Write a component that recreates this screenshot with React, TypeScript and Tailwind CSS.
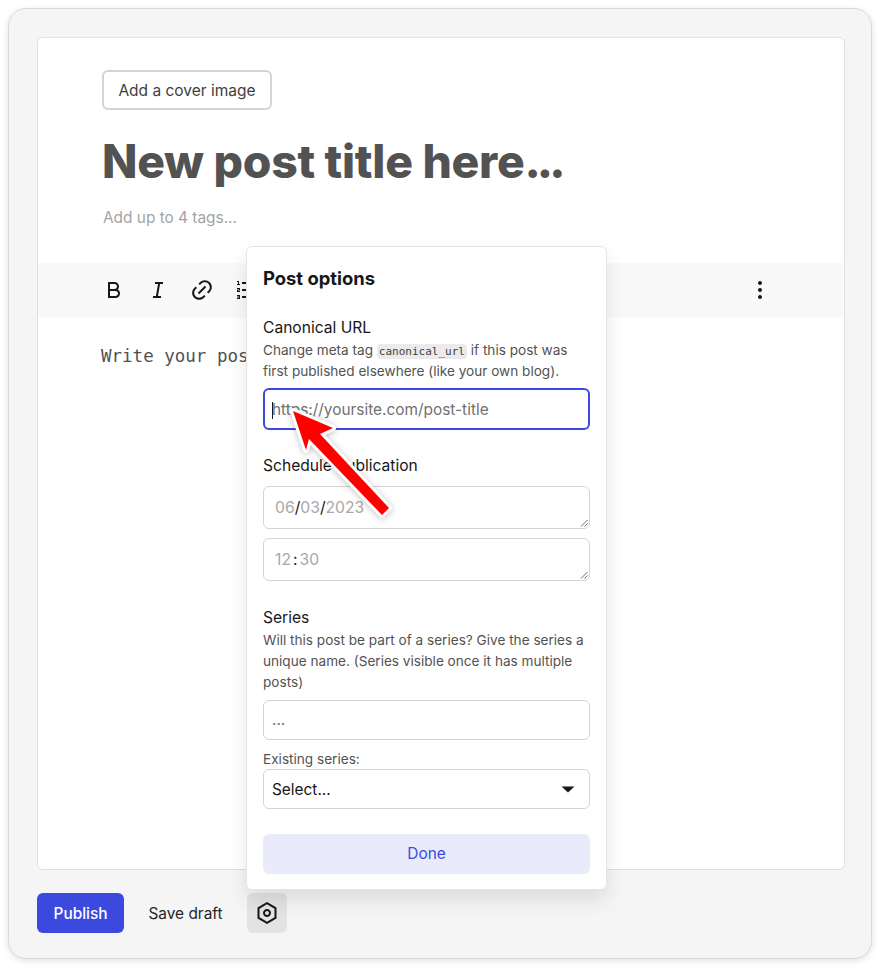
import { RiBold, RiItalic, RiLink, RiListOrdered, RiMore2Fill, RiSettingsLine } from 'react-icons/ri';

function Resizer() {
  return (
    <svg className="absolute right-[1px] bottom-[1px]" width="8" height="8" viewBox="0 0 8 8">
      <path d="M1 7.5 L7.5 1 M4.5 7.5 L7.5 4.5" stroke="#6b6b6b" strokeWidth="1" fill="none" />
    </svg>
  );
}

function DateField({ children }: { children: React.ReactNode }) {
  return (
    <div className="relative flex h-[43px] items-center rounded-md border border-[#d4d4d4] bg-white px-[11px] text-[15.7px] text-[#a8a8a8]">
      {children}
      <Resizer />
    </div>
  );
}

function PostOptions() {
  return (
    <div className="absolute left-[209px] top-[209px] z-10 h-[644px] w-[361px] rounded-md border border-[#e5e5e5] bg-white p-4 shadow-[0_10px_20px_rgba(0,0,0,0.1)]">
      <h2 className="text-[18.4px] leading-[30px] font-bold text-[#171717]">Post options</h2>

      <div className="mt-[23px]">
        <div className="text-[15.6px] leading-6 text-[#171717]">Canonical URL</div>
        <p className="text-[13.6px] leading-[21px] text-[#525252]">
          Change meta tag{' '}
          <code className="rounded-[4px] bg-[#ebebeb] px-[2px] py-[1px] font-['DejaVu_Sans_Mono',monospace] text-[11px] leading-none text-[#404040]">canonical_url</code>{' '}
          if this post was first published elsewhere (like your own blog).
        </p>
        <div className="relative mt-[6px] flex h-[42px] items-center rounded-md border-2 border-[#3b49df] bg-white pt-[2px] pl-[7px] text-[15.4px] text-[#717171]">
          <span className="absolute left-[7px] top-[12px] h-[17px] w-px bg-[#171717]" />
          https://yoursite.com/post-title
        </div>
      </div>

      <div className="mt-[24px]">
        <div className="text-[15.6px] leading-6 text-[#171717]">Schedule Publication</div>
        <div className="mt-[8px] flex flex-col gap-[9px]">
          <DateField>
            06<span className="text-[#171717]">/</span>03<span className="text-[#171717]">/</span>2023
          </DateField>
          <DateField>
            12<span className="mx-[2px] text-[#171717]">:</span>30
          </DateField>
        </div>
      </div>

      <div className="mt-[25px]">
        <div className="text-[15.6px] leading-6 text-[#171717]">Series</div>
        <p className="text-[13.6px] leading-[21px] text-[#525252]">
          Will this post be part of a series? Give the series a unique name. (Series visible once it has multiple posts)
        </p>
        <div className="mt-[7px] flex h-[40px] items-center rounded-md border border-[#d4d4d4] bg-white px-[8px] text-[15.4px] text-[#717171]">...</div>
        <div className="mt-[10px] text-[13.6px] leading-[19px] text-[#525252]">Existing series:</div>
        <div className="flex h-[40px] items-center justify-between rounded-md border border-[#d4d4d4] bg-white pr-[14px] pl-[8px] text-[15.4px] text-[#171717]">
          <span className="pt-[2px]">Select...</span>
          <svg width="14" height="7" viewBox="0 0 14 7">
            <path d="M0.5 0.5 H13.5 L7 6.5 Z" fill="#171717" />
          </svg>
        </div>
      </div>

      <button className="mt-[25px] h-[40px] w-full rounded-md bg-[#e9ebfa] text-[15.4px] text-[#3b49df]">Done</button>
    </div>
  );
}

function Arrow() {
  return (
    <svg className="pointer-events-none absolute left-[270px] top-[390px] z-20 overflow-visible" width="130" height="140" viewBox="270 390 130 140">
      <polygon
        points="293,411 333,428 320,434 389,508 382,515 309,439 306,450"
        fill="#ff0000"
        stroke="#ffffff"
        strokeWidth="6"
        strokeLinejoin="round"
        style={{ filter: 'drop-shadow(0 1px 3px rgba(0,0,0,0.25))' }}
      />
      <polygon points="293,411 333,428 320,434 389,508 382,515 309,439 306,450" fill="#ff0000" />
    </svg>
  );
}

export default function App() {
  return (
    <div className="relative h-[967px] w-[880px] bg-white p-[8px] font-['Inter',sans-serif]">
      <div className="h-[951px] w-[864px] rounded-[18px] border border-[#d9d9d9] bg-[#f5f5f5] pt-[28px] pr-[26px] pl-[28px] shadow-[0_2px_6px_rgba(0,0,0,0.12)]">
        <div className="relative">
          <PostOptions />
          <div className="h-[833px] overflow-hidden rounded-md border border-[#e0e0e0] bg-white">
            <div className="px-16 pt-8">
              <button className="h-[40px] w-[170px] rounded-md border-2 border-[#d4d4d4] pt-[2px] text-[15.5px] text-[#404040]">Add a cover image</button>
              <h1 className="mt-[21px] text-[46.3px] leading-[60px] font-extrabold tracking-[-0.3px] text-[#525252]">
                New post title here<span className="tracking-[-4px]">...</span>
              </h1>
              <div className="mt-[15px] ml-px text-[15.4px] leading-6 text-[#a3a3a3]">Add up to 4 tags...</div>
            </div>
            <div className="mt-[33px] flex h-[55px] items-center justify-between bg-[#f9f9f9] pr-[72px] pb-[2px] pl-[64px] text-[#171717]">
              <div className="flex gap-[20px]">
                <RiBold size={24} />
                <RiItalic size={24} />
                <RiLink size={24} />
                <RiListOrdered size={24} />
              </div>
              <RiMore2Fill size={24} />
            </div>
            <div className="pt-[26px] pr-16 pl-[63px] font-['DejaVu_Sans_Mono',monospace] text-[17.5px] leading-6 text-[#525252]">Write your post content here...</div>
          </div>
        </div>
        <div className="mt-[23px] flex items-center">
          <button className="h-[40px] w-[87px] rounded-md bg-[#3b49df] pt-[2px] text-[15.4px] font-medium text-white">Publish</button>
          <button className="ml-[8px] h-[40px] w-[107px] pt-[2px] text-[15.4px] text-[#262626]">Save draft</button>
          <button className="ml-[8px] flex h-[40px] w-[40px] items-center justify-center rounded-md bg-[#e3e3e3] text-[#171717]">
            <RiSettingsLine size={24} />
          </button>
        </div>
      </div>
      <Arrow />
    </div>
  );
}
